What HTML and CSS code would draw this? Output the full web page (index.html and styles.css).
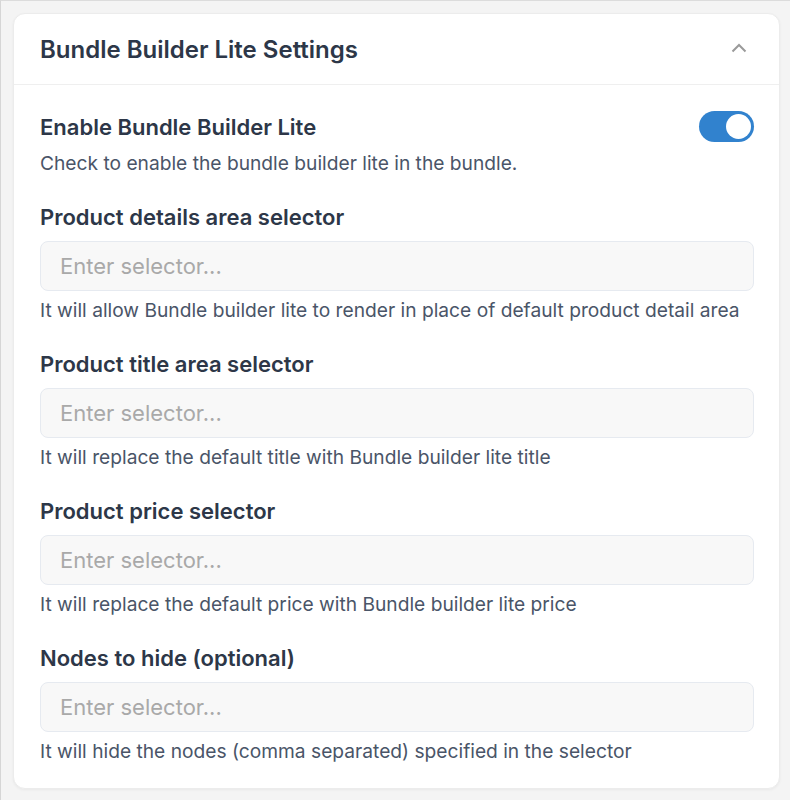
FILE: index.html
```html
<!DOCTYPE html>
<html lang="en">
<head>
    <meta charset="UTF-8">
    <meta name="viewport" content="width=device-width, initial-scale=1.0">
    <title>Bundle Builder Lite Settings</title>
    <link rel="stylesheet" href="styles.css">
</head>
<body>
    <div class="card">
        <div class="card-head">
            <h2 class="card-title">Bundle Builder Lite Settings</h2>
            <svg class="chevron" width="16" height="10" viewBox="0 0 16 10">
                <path d="M1.5 8.5 L8 2 L14.5 8.5" fill="none" stroke="#9a9a9a" stroke-width="2"/>
            </svg>
        </div>
        <div class="card-body">
            <div class="field">
                <div class="toggle-row">
                    <label class="label">Enable Bundle Builder Lite</label>
                    <span class="toggle"><span class="knob"></span></span>
                </div>
                <p class="help help-top">Check to enable the bundle builder lite in the bundle.</p>
            </div>
            <div class="field">
                <label class="label">Product details area selector</label>
                <input class="input" type="text" placeholder="Enter selector...">
                <p class="help">It will allow Bundle builder lite to render in place of default product detail area</p>
            </div>
            <div class="field">
                <label class="label">Product title area selector</label>
                <input class="input" type="text" placeholder="Enter selector...">
                <p class="help">It will replace the default title with Bundle builder lite title</p>
            </div>
            <div class="field">
                <label class="label">Product price selector</label>
                <input class="input" type="text" placeholder="Enter selector...">
                <p class="help">It will replace the default price with Bundle builder lite price</p>
            </div>
            <div class="field">
                <label class="label">Nodes to hide (optional)</label>
                <input class="input" type="text" placeholder="Enter selector...">
                <p class="help">It will hide the nodes (comma separated) specified in the selector</p>
            </div>
        </div>
    </div>
</body>
</html>
```

FILE: styles.css
```css
body{
    margin: 0;
    padding: 12px 10px 11px 12px;
    background: #f4f4f4;
    border-top: 1px solid #dcdcdc;
    border-left: 1px solid #d6d6d6;
    font-family: Inter, "Noto Sans", sans-serif;
    color: #2d3748;
}
.card{
    background: #fff;
    border: 1px solid #ececec;
    border-radius: 12px;
    box-shadow: 0 1px 3px rgba(0, 0, 0, 0.05);
}
.card-head{
    height: 70px;
    padding: 0 26px;
    display: flex;
    align-items: center;
    justify-content: space-between;
    border-bottom: 1px solid #efefef;
}
.card-title{
    margin: 0;
    font-size: 24px;
    font-weight: 600;
    color: #2d3748;
}
.chevron{
    margin-right: 6px;
    margin-top: -2px;
}
.card-body{
    padding: 29px 25px 24px 26px;
    display: flex;
    flex-direction: column;
    gap: 28px;
}
.field{
    display: flex;
    flex-direction: column;
}
.toggle-row{
    display: flex;
    align-items: center;
    justify-content: space-between;
}
.label{
    font-size: 22px;
    font-weight: 600;
    line-height: 26px;
    color: #2d3748;
}
.toggle{
    width: 55px;
    height: 31px;
    margin: -3px 0 -2px;
    border-radius: 16px;
    background: #3182ce;
    display: flex;
    align-items: center;
    justify-content: flex-end;
    padding: 0 3px;
    box-sizing: border-box;
}
.knob{
    width: 25px;
    height: 25px;
    border-radius: 50%;
    background: #fff;
}
.input{
    margin-top: 11px;
    height: 50px;
    padding: 0 19px;
    border: 1px solid #e6eaf0;
    border-radius: 8px;
    background: #f8f8f8;
    font-family: inherit;
    font-size: 22px;
    color: #2d3748;
    box-sizing: border-box;
    outline: none;
}
.input::placeholder{
    color: #a9a9a9;
}
.help{
    margin: 6px 0 0;
    font-size: 19.2px;
    line-height: 26px;
    color: #4a5568;
}
.help-top{
    margin-top: 10px;
}
```
